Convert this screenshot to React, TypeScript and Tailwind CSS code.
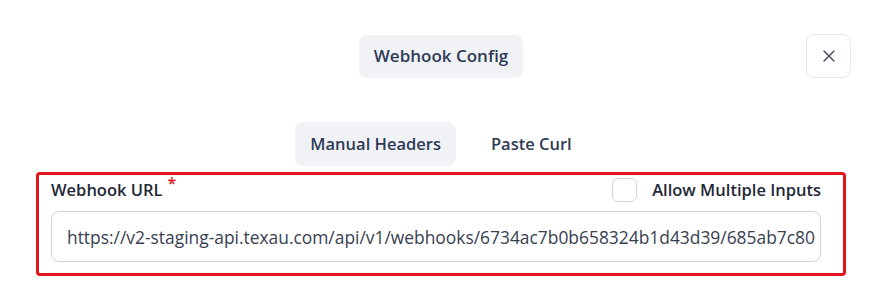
import React from "react";

export default function App() {
  const font = { fontFamily: '"Open Sans", "Noto Sans", sans-serif' };
  return (
    <div className="w-[895px] h-[296px] bg-white pl-[36px] pt-[34px]" style={font}>
      <div className="w-[810px]">
        <div className="grid grid-cols-[1fr_auto_1fr] items-center h-[43px]">
          <div />
          <div className="h-[43px] px-[15px] flex items-center rounded-lg bg-[#f1f2f6] text-[17px] font-semibold text-[#2f3b55]">
            Webhook Config
          </div>
          <div className="flex justify-end">
            <button className="mr-[-5px] w-[45px] h-[44px] rounded-lg border border-[#e5e7eb] flex items-center justify-center text-[#4b5563]">
              <svg width="14" height="14" viewBox="0 0 14 14" fill="none" stroke="currentColor" strokeWidth="1.6" strokeLinecap="round">
                <path d="M2 2 L12 12 M12 2 L2 12" />
              </svg>
            </button>
          </div>
        </div>
        <div className="mt-[45px] flex justify-center gap-[20px]">
          <div className="h-[44px] px-[15px] flex items-center rounded-lg bg-[#f1f2f6] text-[16.5px] font-semibold text-[#2f3b55]">
            Manual Headers
          </div>
          <div className="h-[44px] px-[15px] flex items-center rounded-lg text-[16.5px] font-semibold text-[#2f3b55]">
            Paste Curl
          </div>
        </div>
        <div className="mt-[6px] h-[104px] border-[3px] border-[#e0161c] rounded-[4px] px-[12px] pt-[1px]">
          <div className="flex items-center justify-between h-[28px]">
            <div className="flex items-start text-[16.5px] font-semibold text-[#1f2937]">
              <span>Webhook URL</span>
              <span className="text-[#e0161c] text-[16px] leading-none ml-[5px] -mt-[3px]">*</span>
            </div>
            <label className="flex items-center gap-[15px] mr-[10px]">
              <span className="w-[25px] h-[24px] rounded-md border border-[#d1d5db] bg-white" />
              <span className="text-[16.5px] font-semibold text-[#1f2937]">Allow Multiple Inputs</span>
            </label>
          </div>
          <input
            readOnly
            value="https://v2-staging-api.texau.com/api/v1/webhooks/6734ac7b0b658324b1d43d39/685ab7c8069a"
            className="block mt-[7px] w-[770px] h-[51px] rounded-lg border border-[#d1d5db] pl-[15px] pr-[4px] text-[17.4px] text-[#374151] bg-white outline-none"
            style={font}
          />
        </div>
      </div>
    </div>
  );
}
